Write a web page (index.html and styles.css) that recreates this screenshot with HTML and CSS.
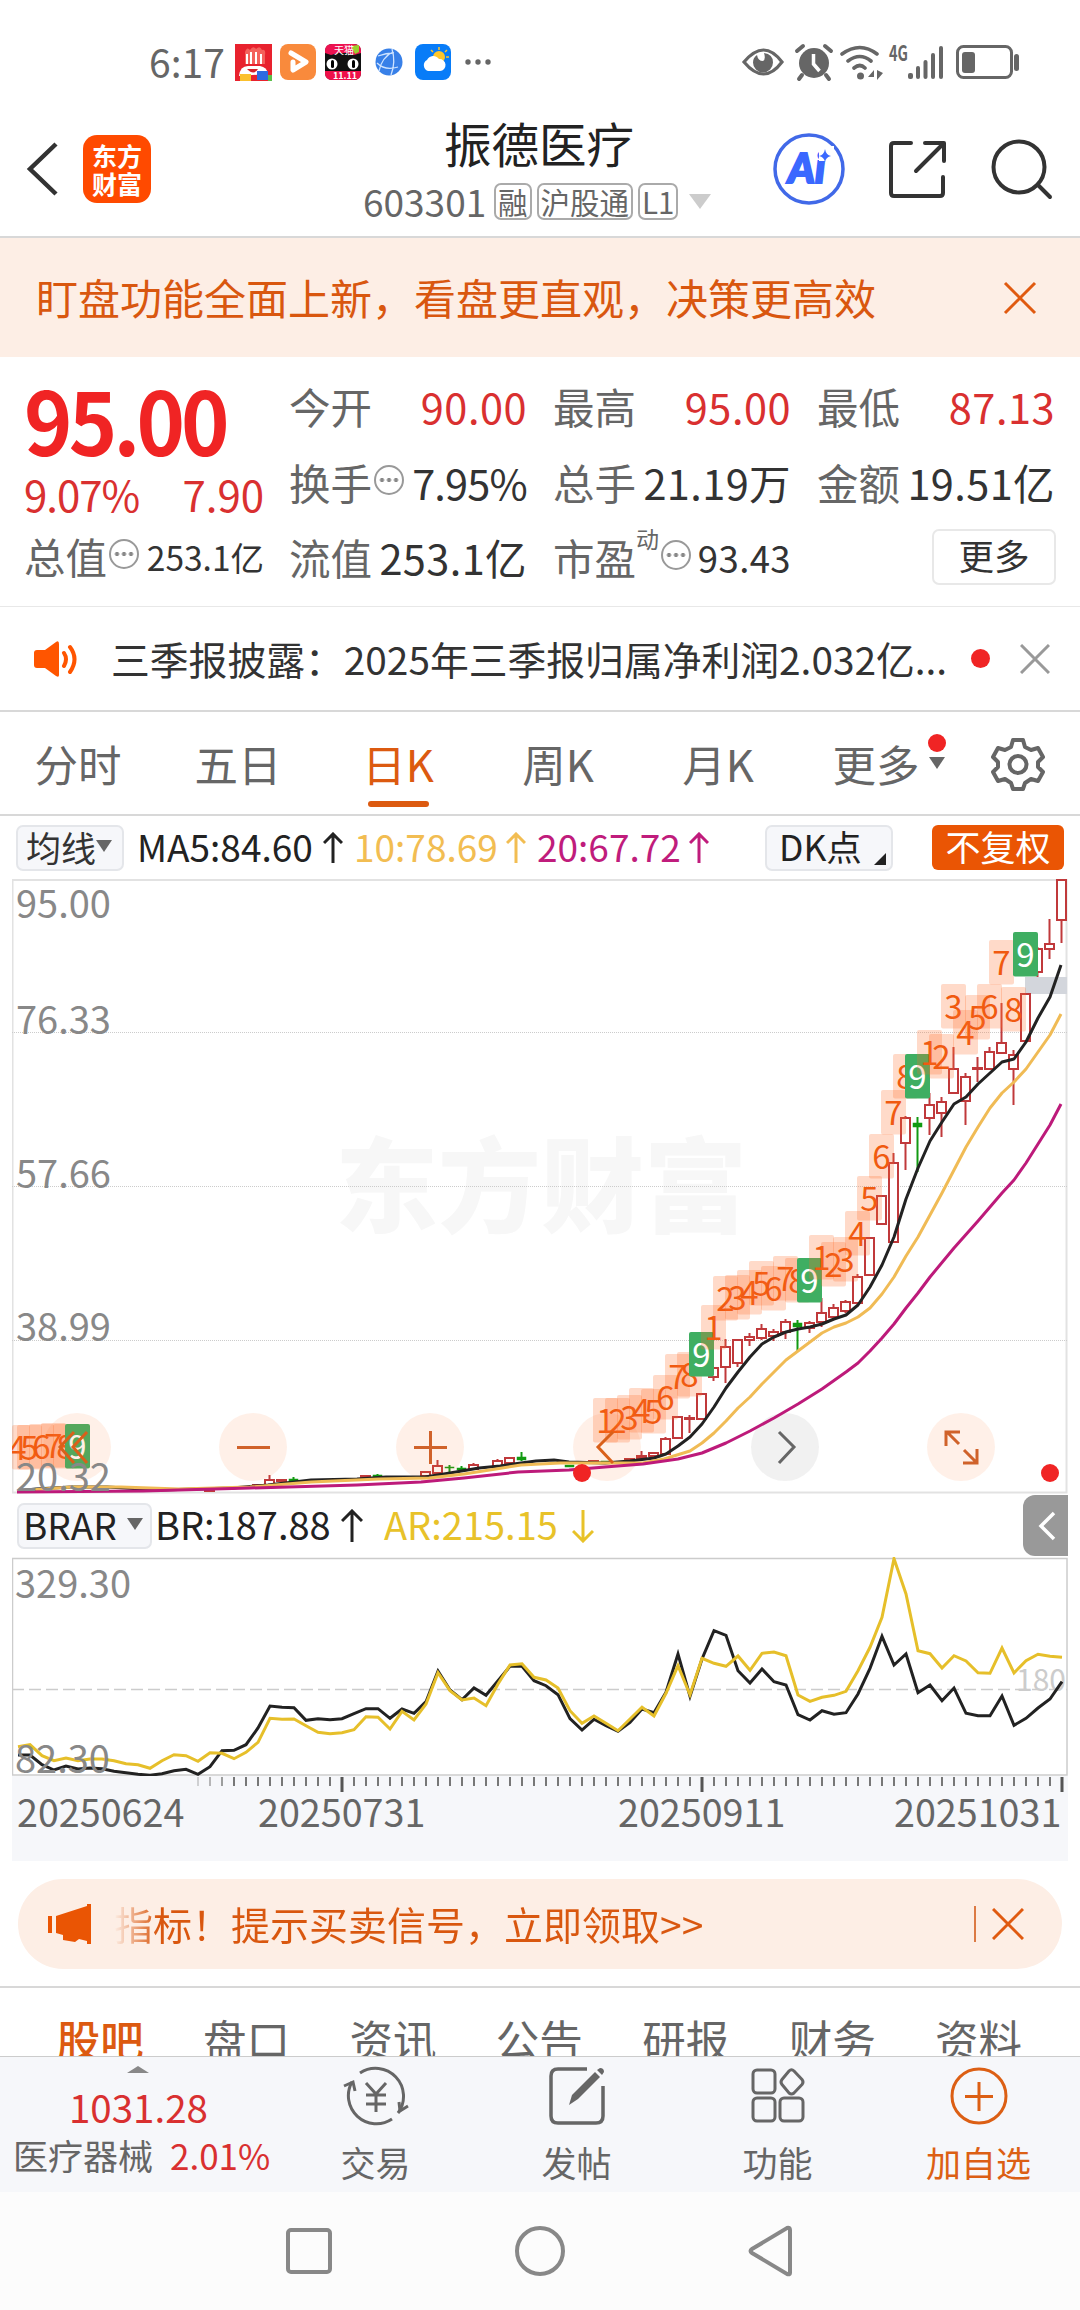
FILE: index.html
```html
<!DOCTYPE html>
<html lang="zh-CN">
<head>
    <meta charset="UTF-8">
    <meta name="viewport" content="width=device-width, initial-scale=1.0">
    <title>振德医疗 603301</title>
    <link rel="stylesheet" href="styles.css">
</head>
<body>
    <div class="status-bar">
        <span class="time">6:17</span>
        <svg class="app-icons" width="260" height="40" viewBox="0 0 260 40">
            <!-- shopping -->
            <rect x="0" y="2" width="37" height="37" fill="#e8222e"/>
            <path d="M10 22V10q2-6 5-2q3-5 6-1q4-4 6 1q4-1 3 5v9z" fill="#f4615c"/>
            <path d="M12 12v10M16 10v12M21 10v12M26 12v10" stroke="#fff" stroke-width="2"/>
            <path d="M4 34q1-10 9-10h12q7 1 8 8z" fill="#fff"/>
            <path d="M12 27h11q-4 7-11 0z" fill="#d3222c"/>
            <rect x="5" y="32" width="11" height="7" fill="#fbc02d"/>
            <rect x="22" y="29" width="11" height="9" fill="#2f6be0"/>
            <rect x="33" y="33" width="4" height="6" fill="#5bbf4a"/>
            <!-- video -->
            <rect x="45" y="2" width="36" height="36" rx="8" fill="#f98a3c"/>
            <path d="M56 11l15 9-13 8v-8" fill="none" stroke="#fff" stroke-width="5" stroke-linejoin="round" stroke-linecap="round"/>
            <!-- cat -->
            <rect x="90" y="2" width="36" height="36" rx="7" fill="#111"/>
            <path d="M90 11V9q0-7 7-7h22q7 0 7 7v2l-7 2-7-2h-9l-7 2z" fill="#ed1250"/>
            <path d="M90 29h36v2q0 7-7 7H97q-7 0-7-7z" fill="#f0104a"/>
            <path d="M116 4l8-1v7l-4 2z" fill="#9ad02d"/>
            <circle cx="97" cy="22" r="5.5" fill="#fff"/>
            <circle cx="118" cy="22" r="5.5" fill="#fff"/>
            <rect x="96" y="18" width="3" height="8" rx="1.5"/>
            <rect x="117" y="18" width="3" height="8" rx="1.5"/>
            <text class="cat-top" x="99" y="12">天猫</text>
            <text class="cat-date" x="98" y="37">11.11</text>
            <!-- browser -->
            <circle cx="154" cy="20" r="13.5" fill="#3880e8"/>
            <path d="M143 14q8-3 16-3M157 7q4 13-1 26M142 21q8 8 21 4M144 29q3-14 14-19" fill="none" stroke="#cfe3ff" stroke-width="1.3"/>
            <!-- weather -->
            <rect x="180" y="2" width="36" height="36" rx="8" fill="#087cf8"/>
            <circle cx="204" cy="15" r="6" fill="#ffc629"/>
            <path d="M204 5v3M196 8l2 2M212 8l-2 2M211 15h3" stroke="#ffc629" stroke-width="1.5"/>
            <path d="M193 29a6 6 0 0 1-1-11a7 7 0 0 1 12-1a6 6 0 1 1 1 12z" fill="#fff"/>
            <g fill="#666"><circle cx="233" cy="20" r="2.7"/><circle cx="243" cy="20" r="2.7"/><circle cx="253" cy="20" r="2.7"/></g>
        </svg>
        <svg class="sys-icons" width="280" height="40" viewBox="0 0 280 40">
            <g fill="none" stroke="#666" stroke-width="3">
                <path d="M4 20q20-24 38 0q-18 24-38 0z" stroke-width="3.2"/>
                <path d="M102 12q18-13 35 0M108 19q12-9 23 0M114 26q6-5 11 0" stroke-width="3.6" stroke-linecap="round"/>
                <rect x="217.500" y="4.500" width="54" height="31" rx="6"/>
            </g>
            <g fill="#666">
                <path d="M17 13q1 6 6 6q3-2 1-8q9 1 9 9.500a10 10 0 0 1-20 0q0-5 4-7.500z"/>
                <circle cx="74" cy="21" r="15"/>
                <path d="M57 9l6-5M91 9l-6-5M62 33l-3 4M86 33l3 4" stroke="#666" stroke-width="4" stroke-linecap="round"/>
                <path d="M73.500 12v10l6 7" fill="none" stroke="#fff" stroke-width="3.500"/>
                <circle cx="120.500" cy="34" r="3.500"/>
                <path d="M134 28v7h-6zM137 28l6 3-6 7z"/>
                <rect x="168" y="31" width="5" height="6" rx="2"/>
                <rect x="176" y="24" width="4" height="13" rx="2"/>
                <rect x="183.500" y="18" width="4" height="19" rx="2"/>
                <rect x="191" y="11" width="4" height="26" rx="2"/>
                <rect x="199" y="4" width="4" height="33" rx="2"/>
                <rect x="222" y="10" width="13" height="21" rx="3"/>
                <rect x="274" y="12" width="5" height="17" rx="2.500"/>
            </g>
            <text class="net" x="149" y="19" textLength="19" lengthAdjust="spacingAndGlyphs">4G</text>
        </svg>
    </div>

    <div class="header">
        <svg class="back" width="34" height="56" viewBox="0 0 34 56"><path d="M30 3L4 28l26 25" fill="none" stroke="#333" stroke-width="4.500"/></svg>
        <div class="logo"><span>东方</span><span>财富</span></div>
        <div class="title-box">
            <h1>振德医疗</h1>
            <div class="code-row">
                <span class="code">603301</span>
                <span class="tag">融</span><span class="tag">沪股通</span><span class="tag">L1</span>
                <i class="tri-down big"></i>
            </div>
        </div>
        <svg class="head-icons" width="284" height="76" viewBox="0 0 284 76">
            <circle cx="38" cy="38" r="34" fill="#fff" stroke="#4169e8" stroke-width="3.500"/>
            <text class="ai" x="17" y="52">Ai</text>
            <rect x="48" y="15" width="15" height="15" fill="#fff"/>
            <path d="M54 18q1 6 6 7q-5 1-6 6q-1-5-6-6q5-1 6-7z" fill="#3a68ff"/>
            <g fill="none" stroke="#333" stroke-width="4" stroke-linecap="round" stroke-linejoin="round">
                <path d="M140 12h-17q-3 0-3 3v47q0 3 3 3h46q3 0 3-3V46M154 12h19v18M172 13l-27 27"/>
                <circle cx="248" cy="36" r="25.500"/>
                <path d="M267 54l12 12"/>
            </g>
        </svg>
    </div>

    <div class="banner">
        <span>盯盘功能全面上新，看盘更直观，决策更高效</span>
        <svg width="34" height="34" viewBox="0 0 34 34"><path d="M2 2l30 30M32 2L2 32" stroke="#e05a10" stroke-width="3"/></svg>
    </div>

    <div class="quote">
        <div class="price-col">
            <div class="price">95.00</div>
            <div class="change"><span>9.07%</span><span>7.90</span></div>
            <div class="item"><label>总值</label><i class="info"></i><b class="small">253.1亿</b></div>
        </div>
        <div class="quote-grid">
            <div class="item"><label>今开</label><b class="up">90.00</b></div>
            <div class="item"><label>最高</label><b class="up">95.00</b></div>
            <div class="item"><label>最低</label><b class="up">87.13</b></div>
            <div class="item"><label>换手</label><i class="info"></i><b class="tight">7.95%</b></div>
            <div class="item"><label>总手</label><b>21.19万</b></div>
            <div class="item"><label>金额</label><b>19.51亿</b></div>
            <div class="item"><label>流值</label><b>253.1亿</b></div>
            <div class="item"><label>市盈</label><sup>动</sup><i class="info"></i><b class="mid">93.43</b></div>
            <div class="item"><button class="more-btn">更多</button></div>
        </div>
    </div>

    <div class="news">
        <svg class="horn" width="46" height="38" viewBox="0 0 46 38">
            <path d="M1 13q0-3 3-3h8L23 2q3-2 3 2v31q0 3-3 1l-11-8H4q-3 0-3-3z" fill="#ff5500"/>
            <path d="M31 13q4 6 0 13M37 7q9 12 0 25" fill="none" stroke="#ff5500" stroke-width="4" stroke-linecap="round"/>
        </svg>
        <span class="news-text">三季报披露：2025年三季报归属净利润2.032亿...</span>
        <i class="red-dot"></i>
        <svg class="news-close" width="30" height="30" viewBox="0 0 30 30"><path d="M1 1l28 28M29 1L1 29" stroke="#999" stroke-width="3"/></svg>
    </div>

    <div class="k-tabs">
        <span>分时</span>
        <span>五日</span>
        <span class="active">日K</span>
        <span>周K</span>
        <span>月K</span>
        <span class="more">更多<i class="tab-dot"></i><i class="tri-down"></i></span>
        <svg class="gear" width="54" height="54" viewBox="0 0 54 54" fill="none" stroke="#666" stroke-width="4" stroke-linejoin="round">
            <path d="M22 3h10l2 7 6 3 7-2 5 9-5 5v5l5 5-5 9-7-2-6 4-2 6H22l-2-6-6-4-7 2-5-9 5-5v-5l-5-5 5-9 7 2 6-3z"/>
            <circle cx="27" cy="27.500" r="8.500"/>
        </svg>
    </div>

    <div class="ind-bar">
        <span class="sel-btn ma-btn">均线<i class="tri-down"></i></span>
        <span class="ind ma5">MA5:84.60<svg width="20" height="32" viewBox="0 0 20 32"><path d="M10 31V2M1 11l9-9 9 9"/></svg></span>
        <span class="ind ma10">10:78.69<svg width="20" height="32" viewBox="0 0 20 32"><path d="M10 31V2M1 11l9-9 9 9"/></svg></span>
        <span class="ind ma20">20:67.72<svg width="20" height="32" viewBox="0 0 20 32"><path d="M10 31V2M1 11l9-9 9 9"/></svg></span>
        <span class="sel-btn dk-btn">DK点<i class="corner"></i></span>
        <span class="fq-btn">不复权</span>
    </div>

    <div class="chart-box">
        <svg id="price-chart" width="1056" height="615" viewBox="12 879 1056 615"></svg>
    </div>

    <div class="ind-bar brar-bar">
        <span class="sel-btn brar-btn">BRAR<i class="tri-down"></i></span>
        <span class="ind br">BR:187.88<svg width="22" height="34" viewBox="0 0 22 34"><path d="M11 33V2M1 12L11 2l10 10"/></svg></span>
        <span class="ind ar">AR:215.15<svg width="22" height="34" viewBox="0 0 22 34"><path d="M11 1v31M1 22l10 10 10-10"/></svg></span>
        <span class="side-tab"><svg width="18" height="30" viewBox="0 0 18 30"><path d="M16 2L3 15l13 13" fill="none" stroke="#fff" stroke-width="3.500"/></svg></span>
    </div>

    <div class="chart-box">
        <svg id="brar-chart" width="1056" height="219" viewBox="0 0 1056 219"></svg>
    </div>
    <div class="axis">
        <svg id="time-axis" width="1056" height="85" viewBox="0 0 1056 85"></svg>
    </div>

    <div class="promo">
        <svg width="46" height="40" viewBox="0 0 46 40"><path d="M1 12h4v17H1zM9 12L40 2V0h4v40h-4v-3l-8-2-4 3-12-2v-5l-7-2z" fill="#ea5504"/></svg>
        <span class="promo-text">指标！提示买卖信号，立即领取&gt;&gt;</span>
        <i class="promo-line"></i>
        <svg class="promo-close" width="32" height="32" viewBox="0 0 32 32"><path d="M1 1l30 30M31 1L1 31" stroke="#e05a10" stroke-width="3"/></svg>
    </div>

    <div class="info-tabs">
        <span class="active">股吧</span>
        <span>盘口</span>
        <span>资讯</span>
        <span>公告</span>
        <span>研报</span>
        <span>财务</span>
        <span>资料</span>
    </div>

    <div class="bottom-bar">
        <div class="sector">
            <i class="tri-up"></i>
            <div class="sector-index">1031.28</div>
            <div class="sector-name">医疗器械<b>2.01%</b></div>
        </div>
        <div class="nav-item">
            <svg width="66" height="60" viewBox="0 0 66 60" fill="none" stroke="#666" stroke-width="3">
                <path d="M17 7a28 28 0 0 1 38 40M49 53A28 28 0 0 1 9 16"/>
                <path d="M1 20l9-4 2 9M65 40l-8 5-1-9"/>
                <path d="M23 17l10 11 10-11M33 28v18M23 29h20M23 38h20"/>
            </svg>
            <span>交易</span>
        </div>
        <div class="nav-item">
            <svg width="56" height="60" viewBox="0 0 56 60" fill="none" stroke="#666" stroke-width="3.500">
                <path d="M38 3H9q-7 0-7 7v40q0 7 7 7h38q7 0 7-7V20"/>
                <path d="M20 39l3-10L46 6l5 5-22 22z" fill="#666" stroke="none"/>
                <path d="M48 4l5 5 2-3q0-4-4-4z" fill="#666" stroke="none"/>
            </svg>
            <span>发帖</span>
        </div>
        <div class="nav-item">
            <svg width="56" height="60" viewBox="0 0 56 60" fill="none" stroke="#666" stroke-width="3">
                <rect x="3" y="4" width="22" height="23" rx="4"/>
                <rect x="3" y="32" width="22" height="23" rx="4"/>
                <rect x="30" y="32" width="23" height="23" rx="4"/>
                <path d="M39 5q2.500-2.500 5 0l8 8.500q2 2.500 0 5L44 27q-2.500 2-5 0l-7-8.500q-2-2.500 0-5z"/>
            </svg>
            <span>功能</span>
        </div>
        <div class="nav-item add">
            <svg width="60" height="60" viewBox="0 0 60 60" fill="none" stroke="#dc5f14" stroke-width="3">
                <circle cx="30" cy="30" r="27"/>
                <path d="M16 30.500h28M30 16v29"/>
            </svg>
            <span>加自选</span>
        </div>
    </div>

    <div class="sys-nav">
        <svg width="48" height="52" viewBox="0 0 48 52"><rect x="3" y="5" width="42" height="42" rx="3"/></svg>
        <svg width="52" height="52" viewBox="0 0 52 52"><circle cx="26" cy="26" r="23"/></svg>
        <svg width="48" height="52" viewBox="0 0 48 52"><path d="M43 5v43q0 2-3 1L5 28q-3-2 0-4L40 3q3-1 3 2z"/></svg>
    </div>

    <script src="chart.js"></script>
</body>
</html>
```

FILE: styles.css
```css
* {
    box-sizing: border-box;
}

body {
    width: 1080px;
    height: 2310px;
    margin: 0;
    overflow: hidden;
    background-color: #fff;
    color: #333;
    font-family: "Noto Sans CJK SC", "Noto Sans", sans-serif;
    line-height: 1;
}

svg {
    display: block;
    flex-shrink: 0;
}

i {
    font-style: normal;
}

b {
    font-weight: normal;
}

.tri-down {
    border: 8px solid transparent;
    border-top: 12px solid #666;
    border-bottom: 0;
}

.tri-down.big {
    border-width: 15px 11px 0;
    border-top-color: #ccc;
}

/* status bar */
.status-bar {
    display: flex;
    align-items: center;
    height: 124px;
    padding-left: 149px;
}

.time {
    width: 86px;
    margin-top: -2px;
    font-size: 39px;
    line-height: 56px;
    color: #666;
}

.sys-icons {
    margin-left: 245px;
}

.cat-top {
    font-size: 10px;
    fill: #fff;
}

.cat-date {
    font-size: 9px;
    font-weight: bold;
    fill: #fff;
}

.net {
    font-size: 21px;
    font-weight: bold;
    fill: #666;
}

/* header */
.header {
    display: flex;
    align-items: center;
    height: 114px;
    padding: 0 25px 22px 26px;
    border-bottom: 2px solid #d8d8d8;
}

.logo {
    display: flex;
    flex-direction: column;
    justify-content: center;
    align-items: center;
    width: 68px;
    height: 68px;
    margin-left: 23px;
    border-radius: 14px;
    background-color: #ff4a00;
    color: #fff;
    font-size: 25px;
    font-weight: bold;
    line-height: 28px;
}

.title-box {
    flex: 1;
    padding: 0 0 0 212px;
}

.title-box h1 {
    margin: -2px 0 14px;
    padding-left: 81px;
    font-size: 47.5px;
    font-weight: normal;
    line-height: 52px;
    color: #222;
}

.code-row {
    display: flex;
    align-items: center;
    gap: 5px;
    color: #666;
}

.code {
    width: 126px;
    font-size: 37px;
}

.tag {
    height: 37px;
    padding: 0 2px;
    border: 2px solid #aaa;
    border-radius: 7px;
    font-size: 29.5px;
    line-height: 32px;
    white-space: nowrap;
}

.code-row .tri-down {
    margin-left: 6px;
}

.ai {
    font-family: "Lato", sans-serif;
    font-size: 41px;
    font-weight: 900;
    font-style: italic;
    fill: #3a68ff;
    stroke: #3a68ff;
    stroke-width: 2;
}

/* banner */
.banner {
    display: flex;
    align-items: center;
    justify-content: space-between;
    height: 119px;
    padding: 0 43px 0 36px;
    background-color: #fdeee5;
    color: #d9570f;
    font-size: 42px;
}

.banner span {
    margin-top: -2px;
    line-height: 60px;
}

/* quote */
.quote {
    display: flex;
    height: 250px;
    padding: 12px 24px 0 24px;
    border-bottom: 1px solid #e8e8e8;
}

.price-col {
    width: 265px;
    padding-right: 25px;
}

.price {
    height: 102px;
    font-size: 87px;
    font-weight: 700;
    line-height: 99px;
    letter-spacing: -4px;
    color: #f02424;
    transform: scaleX(0.945);
    transform-origin: left;
}

.change {
    display: flex;
    justify-content: space-between;
    height: 49px;
    font-size: 42px;
    line-height: 45px;
    letter-spacing: -1px;
    color: #d93030;
}

.change span + span {
    letter-spacing: 0;
}

.quote-grid {
    flex: 1;
    display: grid;
    grid-template-columns: repeat(3, 238px);
    grid-template-rows: 76px 75px 73px;
    column-gap: 26px;
}

.item {
    display: flex;
    align-items: center;
    height: 76px;
    font-size: 41.5px;
}

.price-col .item {
    height: 74px;
}

.item label {
    color: #666;
}

.item b {
    margin-left: auto;
    letter-spacing: 0.4px;
    white-space: nowrap;
}

.item b.up {
    letter-spacing: 0.5px;
    color: #d93030;
}

.item b.tight {
    letter-spacing: -0.8px;
}

.item b.small {
    font-size: 33.5px;
    letter-spacing: 0;
}

.item b.mid {
    font-size: 36.5px;
}

.item sup {
    align-self: flex-start;
    margin-top: 7px;
    font-size: 23px;
    color: #666;
}

.info {
    width: 30px;
    height: 30px;
    margin: -6px 0 0 2px;
    border: 2px solid #999;
    border-radius: 50%;
    background: radial-gradient(circle, #888 1.8px, transparent 2.4px) center / 7px 26px repeat-x;
    background-clip: content-box;
    padding: 0 3px;
}

.more-btn {
    width: 124px;
    height: 56px;
    margin: 0 -1px 2px auto;
    padding: 0 0 4px;
    border: 2px solid #e8e8e8;
    border-radius: 7px;
    background-color: #fff;
    color: #333;
    font-family: inherit;
    font-size: 35.5px;
    line-height: 1;
}

/* news */
.news {
    display: flex;
    align-items: center;
    height: 105px;
    padding-left: 33px;
    border-bottom: 2px solid #d8d8d8;
}

.news-text {
    width: 860px;
    margin-top: -2px;
    padding-left: 32px;
    font-size: 38.8px;
    line-height: 56px;
    white-space: nowrap;
}

.red-dot {
    width: 19px;
    height: 19px;
    margin-left: 32px;
    border-radius: 50%;
    background-color: #f02424;
}

.news-close {
    margin-left: 30px;
}

/* k line tabs */
.k-tabs {
    display: flex;
    height: 104px;
    border-bottom: 2px solid #d8d8d8;
    color: #666;
    font-size: 43.5px;
    line-height: 103px;
}

.k-tabs span {
    position: relative;
    width: 160px;
    padding-right: 4px;
    text-align: center;
}

.k-tabs .active {
    color: #dc5a10;
}

.k-tabs .active::after {
    content: "";
    position: absolute;
    left: 48px;
    bottom: 7px;
    width: 61px;
    height: 6px;
    border-radius: 3px;
    background-color: #dc5a10;
}

.k-tabs .more {
    padding-right: 8px;
}

.tab-dot {
    position: absolute;
    top: 22px;
    right: 14px;
    width: 18px;
    height: 18px;
    border-radius: 50%;
    background-color: #f02424;
}

.k-tabs .tri-down {
    position: absolute;
    top: 45px;
    right: 15px;
}

.gear {
    margin: 25px 0 0 31px;
}

/* indicator bars */
.ind-bar {
    display: flex;
    align-items: center;
    height: 63px;
    padding: 0 16px 0 16px;
    font-size: 37px;
}

.sel-btn {
    display: flex;
    align-items: center;
    height: 46px;
    padding-bottom: 3px;
    border: 2px solid #e4e6ea;
    border-radius: 7px;
    background-color: #f6f7fa;
}

.ma-btn {
    width: 108px;
    padding-left: 8px;
    font-size: 35px;
}

.ind {
    display: flex;
    align-items: center;
    justify-content: space-between;
    height: 46px;
    padding-bottom: 3px;
    white-space: nowrap;
}

.ind svg {
    position: relative;
    top: 2px;
    fill: none;
    stroke: currentColor;
    stroke-width: 3;
}

.ma5 {
    width: 206px;
    margin-left: 13px;
    color: #222;
}

.ma10 {
    width: 172px;
    margin-left: 11px;
    color: #f2bd52;
}

.ma20 {
    width: 172px;
    margin-left: 11px;
    color: #c01c7c;
}

.dk-btn {
    position: relative;
    width: 128px;
    margin-left: 56px;
    padding-left: 12px;
    color: #222;
    font-size: 35.5px;
}

.corner {
    position: absolute;
    right: 5px;
    bottom: 4px;
    border-left: 12px solid transparent;
    border-bottom: 12px solid #222;
}

.fq-btn {
    width: 132px;
    height: 45px;
    margin-left: auto;
    border-radius: 6px;
    background-color: #ea5504;
    color: #fff;
    font-size: 35px;
    line-height: 42px;
    text-align: center;
}

.brar-bar {
    padding-right: 12px;
    padding-left: 17px;
}

.brar-btn {
    width: 135px;
    padding: 0 7px 3px 4px;
    justify-content: space-between;
    color: #222;
}

.br {
    width: 208px;
    margin-left: 3px;
    font-size: 38px;
    color: #222;
}

.ar {
    width: 210px;
    margin-left: 21px;
    font-size: 38px;
    color: #e8c229;
}

.side-tab {
    display: flex;
    align-items: center;
    justify-content: center;
    width: 45px;
    height: 61px;
    margin-left: auto;
    border-radius: 12px 0 0 12px;
    background-color: #999;
    padding-left: 3px;
}

/* charts */
.chart-box,
.axis {
    width: 1056px;
    margin-left: 12px;
}

.axis {
    background-color: #f6f7fa;
}

.y-label {
    font-size: 38px;
    fill: #888;
}

.watermark {
    font-size: 103px;
    font-weight: 900;
    fill: #f7f7f7;
}

.badge {
    font-size: 33px;
    text-anchor: middle;
    fill: #f05a10;
}

.badge.nine {
    fill: #fff;
}

.level {
    font-size: 30px;
    text-anchor: end;
    fill: #ccc;
}

.date {
    font-size: 37.7px;
    fill: #666;
}

/* promo */
.promo {
    display: flex;
    align-items: center;
    width: 1044px;
    height: 90px;
    margin: 18px 0 17px 18px;
    padding: 0 38px 0 29px;
    border-radius: 45px;
    background-color: #fdeee5;
}

.promo-text {
    margin: -2px 0 0 21px;
    font-size: 39px;
    color: transparent;
    background: linear-gradient(90deg, #fdeee5, #d9570f 44px);
    background-clip: text;
    -webkit-background-clip: text;
    line-height: 56px;
}

.promo-line {
    width: 2px;
    height: 36px;
    margin-left: auto;
    background-color: #dc7a44;
}

.promo-close {
    margin-left: 16px;
}

/* info tabs, cut off by the bottom bar */
.info-tabs {
    display: flex;
    height: 70px;
    padding-left: 27px;
    overflow: hidden;
    border-top: 2px solid #d8d8d8;
    color: #666;
    font-size: 43.5px;
    line-height: 102px;
}

.info-tabs span {
    width: 146.4px;
    text-align: center;
}

.info-tabs .active {
    color: #dc5a10;
    font-weight: 500;
}

/* bottom bar */
.bottom-bar {
    display: flex;
    height: 136px;
    border-top: 1px solid #ccc;
    background-color: #f6f7fa;
}

.sector {
    width: 275px;
}

.tri-up {
    display: block;
    width: 0;
    margin: 9px 0 0 127px;
    border: 11px solid transparent;
    border-top: 0;
    border-bottom: 7px solid #888;
}

.sector-index {
    margin-top: 11px;
    padding-left: 69px;
    color: #d93030;
    font-size: 38.5px;
    line-height: 44px;
}

.sector-name {
    padding-left: 13px;
    color: #666;
    font-size: 35px;
    line-height: 53px;
    white-space: nowrap;
}

.sector-name b {
    margin-left: 17px;
    color: #d93030;
}

.nav-item {
    display: flex;
    flex-direction: column;
    align-items: center;
    width: 201px;
    padding-top: 9px;
    color: #666;
    font-size: 35px;
}

.nav-item span {
    margin-top: 18px;
}

.add {
    color: #dc5f14;
}

/* system navigation */
.sys-nav {
    display: flex;
    justify-content: center;
    gap: 181px;
    height: 118px;
    padding-top: 33px;
    background-color: #fcfcfc;
}

.sys-nav svg {
    fill: none;
    stroke: #888;
    stroke-width: 4;
}
```

FILE: chart.js
```js
const NS = "http://www.w3.org/2000/svg";
const RED = "#c0393b";
const GREEN = "#129a12";

function add(parent, name, attrs, text) {
    const el = document.createElementNS(NS, name);
    for (const key in attrs) el.setAttribute(key, attrs[key]);
    if (text !== undefined) el.textContent = text;
    parent.appendChild(el);
    return el;
}

// bars are 12px apart, k counts back from the newest one
const barX = k => 1061.5 - 12 * k;

// [k, body top, body bottom, high, low, falling]
const candles = [
    [0, 880, 920, 880, 943], [1, 944, 949, 919, 959], [2, 949, 972, 947, 977],
    [3, 994, 1041, 994, 1041], [4, 1055, 1069, 1050, 1105], [5, 1043, 1053, 1003, 1053],
    [6, 1052, 1069, 1047, 1069], [7, 1068, 1069, 1057, 1082], [8, 1077, 1101, 1073, 1125],
    [9, 1069, 1093, 1047, 1093], [10, 1102, 1113, 1097, 1137], [11, 1105, 1118, 1093, 1135],
    [12, 1123, 1127, 1117, 1172, 1], [13, 1118, 1143, 1116, 1170], [14, 1163, 1242, 1153, 1242],
    [15, 1196, 1224, 1196, 1224], [16, 1238, 1275, 1238, 1275], [17, 1277, 1303, 1274, 1303],
    [18, 1302, 1311, 1300, 1313], [19, 1308, 1317, 1304, 1317], [20, 1313, 1322, 1298, 1327],
    [21, 1323, 1328, 1321, 1333], [22, 1323, 1327, 1320, 1351, 1], [23, 1322, 1332, 1319, 1339],
    [24, 1332, 1336, 1329, 1341], [25, 1329, 1338, 1324, 1340], [26, 1337, 1340, 1333, 1346],
    [27, 1340, 1363, 1340, 1367], [28, 1347, 1367, 1339, 1383], [29, 1368, 1377, 1368, 1381],
    [30, 1394, 1419, 1394, 1419], [31, 1418, 1419, 1415, 1433], [32, 1417, 1438, 1417, 1438],
    [33, 1439, 1454, 1437, 1454], [34, 1453, 1456, 1452, 1456], [35, 1456, 1458, 1451, 1459],
    [36, 1459, 1460, 1458, 1461], [38, 1461, 1462, 1461, 1462, 1], [39, 1461, 1462, 1461, 1462],
    [41, 1465, 1467, 1465, 1467, 1], [45, 1457, 1460, 1452, 1461, 1], [46, 1458, 1463, 1458, 1463],
    [47, 1461, 1466, 1459, 1466], [49, 1465, 1469, 1463, 1469], [50, 1468, 1470, 1466, 1471, 1],
    [51, 1467, 1468, 1465, 1472, 1], [52, 1466, 1473, 1460, 1473], [53, 1472, 1476, 1472, 1476],
    [57, 1475, 1477, 1474, 1478, 1], [58, 1476, 1477, 1476, 1477], [64, 1479, 1481, 1477, 1482, 1],
    [65, 1480, 1481, 1480, 1481], [66, 1480, 1485, 1475, 1485], [67, 1485, 1486, 1485, 1486],
    [71, 1490, 1491, 1490, 1491]
];

// [k, digit, top]
const badges = [
    [87, 4, 1425], [86, 5, 1425], [85, 6, 1424], [84, 7, 1423], [83, 8, 1424], [82, 9, 1424],
    [38, 1, 1398], [37, 2, 1398], [36, 3, 1395], [35, 4, 1388], [34, 5, 1389], [33, 6, 1375],
    [32, 7, 1354], [31, 8, 1352], [30, 9, 1332], [29, 1, 1305], [28, 2, 1276], [27, 3, 1275],
    [26, 4, 1270], [25, 5, 1261], [24, 6, 1266], [23, 7, 1256], [22, 8, 1258], [21, 9, 1258],
    [20, 1, 1235], [19, 2, 1242], [18, 3, 1237], [17, 4, 1211], [16, 5, 1176], [15, 6, 1134],
    [14, 7, 1090], [13, 8, 1054], [12, 9, 1054], [11, 1, 1030], [10, 2, 1034], [9, 3, 984],
    [8, 4, 1010], [7, 5, 995], [6, 6, 984], [5, 7, 940], [4, 8, 987], [3, 9, 932]
];

const ma5 = "17,1491 36,1489 71,1487 107,1487 160,1490 232,1488 268,1485 311,1480 357,1479 386,1477 425,1477 " +
    "450,1473 479,1468 500,1466 521,1463 536,1461 554,1460 569,1462 605,1463 630,1461 654,1458 666,1454 " +
    "678,1446 690,1437 702,1424 714,1407 726,1388 738,1372 750,1357 762,1344 774,1337 786,1332 798,1329 " +
    "810,1327 822,1324 834,1319 846,1315 858,1305 870,1287 882,1265 894,1237 906,1199 918,1168 930,1141 " +
    "942,1122 954,1104 966,1097 978,1084 990,1073 1002,1062 1014,1059 1026,1042 1038,1018 1050,997 1061,965";
const ma10 = "17,1491 71,1487 121,1487 179,1489 250,1487 311,1482 379,1479 429,1478 464,1474 496,1469 521,1465 " +
    "560,1463 605,1463 643,1463 664,1459 690,1451 702,1443 714,1433 726,1421 738,1408 750,1397 762,1384 " +
    "774,1372 786,1360 798,1351 810,1342 822,1333 834,1327 846,1323 858,1317 870,1308 882,1294 894,1277 " +
    "906,1256 918,1237 930,1215 942,1193 954,1170 966,1147 978,1127 990,1108 1002,1093 1014,1082 1026,1069 " +
    "1038,1052 1050,1035 1061,1014";
const ma20 = "17,1492 143,1491 250,1488 357,1485 421,1482 464,1478 518,1472 569,1470 605,1467 643,1464 678,1459 " +
    "702,1453 726,1443 750,1431 774,1418 798,1404 822,1389 846,1372 858,1363 870,1351 882,1338 894,1324 " +
    "906,1308 918,1293 930,1277 954,1248 978,1221 1002,1193 1014,1180 1026,1163 1038,1144 1050,1125 1061,1104";

const br = [793, 793, 822, 838, 826, 835, 832, 834, 842, 846, 851, 854, 849, 840, 836, 851, 828, 780, 779, 762,
    712, 646, 650, 651, 689, 684, 687, 684, 669, 654, 654, 683, 655, 668, 633, 541, 598, 627, 592, 614,
    570, 527, 527, 570, 585, 612, 684, 718, 686, 705, 722, 695, 655, 666, 605, 490, 617, 505, 420, 434,
    540, 577, 535, 573, 583, 672, 688, 660, 671, 666, 610, 533, 437, 523, 490, 606, 583, 630, 592, 668,
    675, 675, 616, 704, 683, 652, 625, 573];
const ar = [768, 762, 795, 810, 802, 810, 805, 805, 810, 819, 822, 833, 810, 792, 795, 812, 786, 788, 804, 785,
    755, 683, 686, 685, 705, 725, 729, 726, 717, 678, 680, 715, 662, 688, 640, 546, 600, 628, 622, 645,
    580, 523, 519, 560, 568, 592, 660, 698, 676, 698, 720, 685, 650, 676, 608, 525, 612, 503, 518, 527,
    496, 539, 488, 484, 495, 613, 632, 620, 614, 602, 540, 470, 380, 204, 310, 480, 489, 532, 495, 511,
    546, 548, 472, 547, 510, 491, 497, 500];

function drawPrice() {
    const svg = document.getElementById("price-chart");
    add(svg, "rect", { x: 12.5, y: 880, width: 1054, height: 612.5, fill: "none", stroke: "#e2e2e2", "stroke-width": 2 });
    add(svg, "text", { x: 335, y: 1225, class: "watermark" }, "东方财富");
    [1032, 1186, 1340].forEach(y => {
        add(svg, "line", { x1: 12, x2: 1067, y1: y + 0.5, y2: y + 0.5, stroke: "#ccc", "stroke-dasharray": "1 1" });
    });
    add(svg, "rect", { x: 1025, y: 977, width: 42, height: 17, fill: "#d3d6dc" });

    candles.forEach(([k, top, bottom, high, low, falling]) => {
        const x = barX(k);
        const color = falling ? GREEN : RED;
        if (high < top) add(svg, "line", { x1: x, x2: x, y1: high, y2: top, stroke: color, "stroke-width": 2 });
        if (low > bottom) add(svg, "line", { x1: x, x2: x, y1: bottom, y2: low, stroke: color, "stroke-width": 2 });
        add(svg, "rect", {
            x: x - 4.5, y: top, width: 9, height: Math.max(bottom - top, 1),
            fill: falling ? color : "#fff", stroke: color, "stroke-width": falling ? 0.5 : 2
        });
    });

    badges.forEach(([k, digit, top]) => {
        const x = barX(k);
        const nine = digit === 9;
        add(svg, "rect", {
            x: Math.max(x - 12.5, 12), y: top, width: Math.min(25, x + 12.5 - 12), height: 44.5, rx: 2,
            fill: nine ? "#3fae62" : "#ff6a28", "fill-opacity": nine ? 1 : 0.25
        });
        add(svg, "text", { x: x, y: top + 35, class: nine ? "badge nine" : "badge" }, digit);
    });

    // round buttons over the chart
    [77, 253, 430, 607, 785, 961].forEach((x, i) => {
        add(svg, "circle", { cx: x, cy: 1447, r: 34, fill: i === 4 ? "#eee" : "#ff7832", "fill-opacity": i === 4 ? 0.8 : 0.11 });
    });

    [[ma5, "#222"], [ma10, "#f0bb55"], [ma20, "#bd1a7a"]].forEach(([points, color]) => {
        add(svg, "polyline", { points: points, fill: "none", stroke: color, "stroke-width": 3, "stroke-linejoin": "round" });
    });

    [["M74 1432l-14 15 14 16M87 1432l-14 15 14 16", "#d9601a"],
        ["M237 1447.500h33", "#d0622a"],
        ["M414 1447.500h33M430.500 1431v33", "#d0622a"],
        ["M613 1432l-15 15 15 16", "#d9601a"],
        ["M779 1432l15 15-15 16", "#666"],
        ["M946 1446v-14h14M947 1432l12 12M977 1449v14h-14M976 1462l-12-12", "#d0622a"]
    ].forEach(([d, color]) => {
        add(svg, "path", { d: d, fill: "none", stroke: color, "stroke-width": 3 });
    });
    add(svg, "circle", { cx: 582, cy: 1473, r: 9, fill: "#f02424" });
    add(svg, "circle", { cx: 1050, cy: 1473, r: 9, fill: "#f02424" });

    [["95.00", 918], ["76.33", 1034], ["57.66", 1188], ["38.99", 1341], ["20.32", 1491]].forEach(([text, y]) => {
        add(svg, "text", { x: 16, y: y, class: "y-label" }, text);
    });
}

function drawBrar() {
    const svg = document.getElementById("brar-chart");
    add(svg, "rect", { x: 0.5, y: 1.5, width: 1054.5, height: 216.5, fill: "none", stroke: "#ccc", "stroke-width": 1.5 });
    add(svg, "line", { x1: 0, x2: 1055, y1: 132.5, y2: 132.5, stroke: "#ccc", "stroke-width": 1.5, "stroke-dasharray": "12 5" });
    add(svg, "text", { x: 1054, y: 134, class: "level" }, "180");
    // three units per pixel, 202 is the top edge
    const line = values => values.map((v, i) => (6 + 12 * i) + "," + ((v - 202) / 3 + 1).toFixed(1)).join(" ");
    [[br, "#222"], [ar, "#e6bf2a"]].forEach(([values, color]) => {
        add(svg, "polyline", { points: line(values), fill: "none", stroke: color, "stroke-width": 3 });
    });
    add(svg, "text", { x: 3, y: 41, class: "y-label" }, "329.30");
    add(svg, "text", { x: 3, y: 216, class: "y-label" }, "82.30");
}

function drawAxis() {
    const svg = document.getElementById("time-axis");
    for (let i = 15; i < 88; i++) {
        const long = i === 27 || i === 57 || i === 87;
        const x = 6 + 12 * i;
        add(svg, "line", {
            x1: x, x2: x, y1: 1, y2: long ? 16 : 10, stroke: long ? "#555" : "#777",
            "stroke-width": long ? 3 : 2, opacity: i < 18 ? 0.3 + (i - 15) * 0.2 : 1
        });
    }
    [["20250624", 5], ["20250731", 246], ["20250911", 606], ["20251031", 882]].forEach(([text, x]) => {
        add(svg, "text", { x: x, y: 51, class: "date" }, text);
    });
}

drawPrice();
drawBrar();
drawAxis();
```
